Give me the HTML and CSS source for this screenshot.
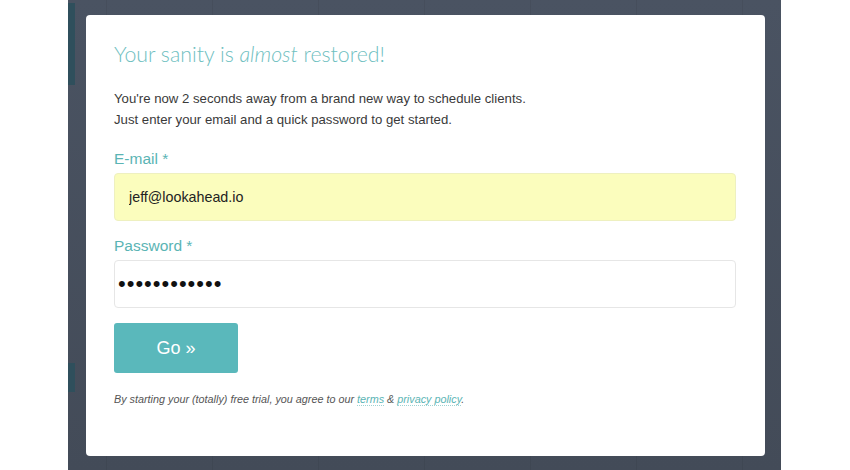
FILE: index.html
```html
<!DOCTYPE html>
<html>
	<head>
		<meta charset="UTF-8">
		<title>Sign up</title>
		<link rel="stylesheet" href="styles.css">
	</head>
	<body>
		<div id="backdrop">
			<div class="modal">
				<h1>Your sanity is <em>almost</em> restored!</h1>
				<p class="intro">You're now 2 seconds away from a brand new way to schedule clients.<br>Just enter your email and a quick password to get started.</p>
				<label class="label" for="email">E-mail *</label>
				<input class="field filled" id="email" type="text" value="jeff@lookahead.io">
				<label class="label" for="pass">Password *</label>
				<input class="field" id="pass" type="password" value="abcdefghijkl">
				<button class="go">Go &raquo;</button>
				<p class="terms">By starting your (totally) free trial, you agree to our <a href="#">terms</a> &amp; <a href="#">privacy policy</a>.</p>
			</div>
		</div>
	</body>
</html>
```

FILE: styles.css
```css
*{padding: 0;margin: 0;box-sizing: border-box;}
html,body{height: 100%;background: #fff;}
body{font-family: "Liberation Sans", Arial, sans-serif;color: #333;}

#backdrop{
	width: 713px;height: 470px;margin-left: 68px;
	padding: 15px 16px 0 18px;
	background:
		linear-gradient(#2f4f5c, #2f4f5c) 0 3px / 7px 82px no-repeat,
		linear-gradient(#2f4f5c, #2f4f5c) 0 363px / 7px 29px no-repeat,
		repeating-linear-gradient(90deg, transparent 0, transparent 38px, rgba(0,0,0,0.06) 38px, rgba(0,0,0,0.06) 39px, transparent 39px, transparent 106px),
		linear-gradient(#4a5362, #434b58);
}

.modal{
	width: 679px;height: 441px;background: #fff;border-radius: 4px;
	padding: 26px 28px 0 28px;
	display: flex;flex-direction: column;align-items: flex-start;
}

.modal h1{font-family: Lato, "Liberation Sans", sans-serif;font-weight: 300;font-size: 21.3px;line-height: 26px;color: #6fc0bf;}
.modal h1 em{font-style: italic;}

.intro{font-size: 13.2px;line-height: 21px;margin-top: 21px;color: #3a3a3a;}

.label{font-size: 15.5px;line-height: 18px;color: #5ab4b4;margin-top: 16px;}
.label + .field{margin-top: 5px;}
.intro + .label{margin-top: 20px;}

.field{
	width: 622px;height: 48px;border: 1px solid #e6e6e6;border-radius: 4px;
	padding: 0 14px;font-family: "Liberation Sans", Arial, sans-serif;font-size: 14.3px;color: #222;
	background: #fff;outline: none;
}
.field.filled{background: #fbfdbd;border-color: #eef0c0;}
#pass{font-size: 22px;letter-spacing: 1px;padding-left: 3px;color: #111;}

.go{
	margin-top: 15px;width: 124px;height: 50px;border: none;border-radius: 3px;
	background: #5ab8bb;color: #fff;font-family: "Liberation Sans", Arial, sans-serif;font-size: 18px;
}

.terms{margin-top: 20px;font-size: 10.8px;font-style: italic;color: #555;}
.terms a{color: #5ab4b4;text-decoration: none;border-bottom: 1px dotted #9fd3d3;}
```
